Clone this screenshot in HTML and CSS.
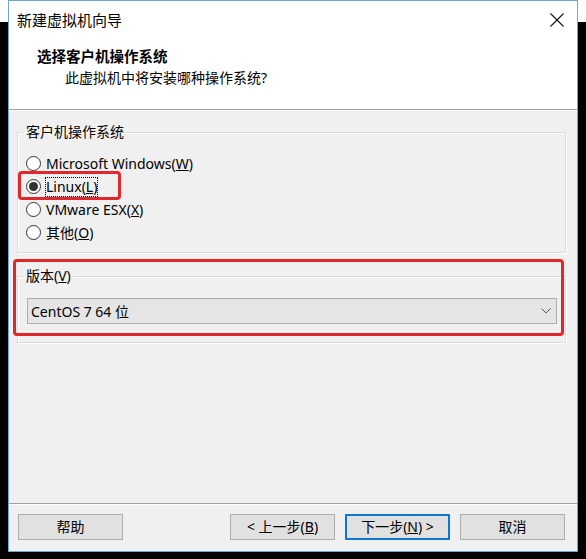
FILE: index.html
```html
<!DOCTYPE html>
<html lang="zh-CN">
<head>
<meta charset="utf-8">
<title>新建虚拟机向导</title>
<link rel="stylesheet" href="styles.css">
</head>
<body>
<div class="window">
  <div class="titlebar">
    <span class="title">新建虚拟机向导</span>
    <svg class="close" width="14" height="14" viewBox="0 0 14 14"><path d="M0.5 0.5 L13.5 13.5 M13.5 0.5 L0.5 13.5" stroke="#111" stroke-width="1.1" fill="none"/></svg>
  </div>
  <div class="header">
    <div class="h-title">选择客户机操作系统</div>
    <div class="h-sub">此虚拟机中将安装哪种操作系统?</div>
  </div>
  <div class="content">
    <fieldset class="group group-os">
      <legend>客户机操作系统</legend>
      <div class="radio-row"><span class="radio"></span><span class="rlabel">Microsoft Windows(<u>W</u>)</span></div>
      <div class="radio-row"><span class="radio checked"></span><span class="rlabel focus">Linux(<u>L</u>)</span></div>
      <div class="radio-row"><span class="radio"></span><span class="rlabel">VMware ESX(<u>X</u>)</span></div>
      <div class="radio-row"><span class="radio"></span><span class="rlabel">其他(<u>O</u>)</span></div>
    </fieldset>
    <fieldset class="group group-ver">
      <legend>版本(<u>V</u>)</legend>
      <div class="combo">
        <span>CentOS 7 64 位</span>
        <svg class="chev" width="10" height="6" viewBox="0 0 10 6"><path d="M0.5 0.5 L5 5 L9.5 0.5" stroke="#555" stroke-width="1" fill="none"/></svg>
      </div>
    </fieldset>
  </div>
  <div class="footer">
    <button class="btn">帮助</button>
    <span class="spacer"></span>
    <button class="btn">&lt; 上一步(<u>B</u>)</button>
    <button class="btn primary">下一步(<u>N</u>) &gt;</button>
    <button class="btn">取消</button>
  </div>
  <div class="mark mark-linux"></div>
  <div class="mark mark-ver"></div>
</div>
</body>
</html>
```
FILE: styles.css
```css
html, body {
  margin: 0;
  padding: 0;
}
body {
  width: 586px;
  height: 559px;
  background: linear-gradient(to bottom, #ffffff 0, #ffffff 22px, #000000 22px, #000000 100%);
  font-family: "Noto Sans", "Noto Sans CJK SC", sans-serif;
  font-size: 14px;
  color: #000;
  overflow: hidden;
}
.window {
  position: relative;
  margin-left: 8px;
  width: 570px;
  height: 552px;
  box-sizing: border-box;
  border: 1px solid #6ea7d6;
  background: #f0f0f0;
  display: flex;
  flex-direction: column;
}
.titlebar {
  height: 37px;
  background: #fff;
  display: flex;
  align-items: center;
  justify-content: space-between;
  padding: 0 13px 0 8px;
  flex: none;
}
.title {
  font-size: 15px;
}
.close {
  display: block;
}
.header {
  height: 72px;
  background: #fff;
  border-bottom: 1px solid #a0a0a0;
  box-sizing: border-box;
  flex: none;
  padding-top: 6px;
}
.h-title {
  font-weight: bold;
  font-size: 14.5px;
  line-height: 24px;
  padding-left: 28px;
}
.h-sub {
  line-height: 20px;
  padding-left: 56px;
  font-size: 14px;
}
.content {
  flex: 1;
  padding: 11px 11px 0 8px;
  display: flex;
  flex-direction: column;
  gap: 13px;
  border-top: 1px solid #fff;
}
.group {
  margin: 0;
  border: 1px solid #dcdcdc;
  box-shadow: inset 1px 1px 0 #fff, 1px 1px 0 #fff;
  padding: 0 6px;
  min-width: 0;
}
.group legend {
  padding: 0 2px;
  line-height: 20px;
  font-size: 14px;
}
.group-os {
  padding-top: 10px;
  padding-bottom: 8px;
}
.radio-row {
  height: 23px;
  display: flex;
  align-items: center;
  gap: 5px;
  padding-left: 2px;
}
.radio {
  width: 15px;
  height: 15px;
  box-sizing: border-box;
  border: 1px solid #333;
  border-radius: 50%;
  background: #fff;
  display: flex;
  align-items: center;
  justify-content: center;
  flex: none;
}
.radio.checked::after {
  content: "";
  width: 9px;
  height: 9px;
  border-radius: 50%;
  background: #333;
}
.rlabel {
  line-height: 20px;
}
.rlabel.focus {
  outline: 1px dotted #000;
  outline-offset: -1px;
  padding: 0 1px;
  margin-left: -1px;
}
.group-ver {
  padding-top: 12px;
  padding-bottom: 18px;
  padding-left: 9px;
  padding-right: 8px;
}
.group-ver legend {
  margin-left: -3px;
}
.combo {
  height: 26px;
  box-sizing: border-box;
  border: 1px solid #adadad;
  background: #e5e5e5;
  display: flex;
  align-items: center;
  justify-content: space-between;
  padding: 0 5px 0 3px;
}
.chev {
  display: block;
}
.footer {
  height: 48px;
  flex: none;
  border-top: 1px solid #a0a0a0;
  box-shadow: inset 0 1px 0 #fff;
  box-sizing: border-box;
  display: flex;
  align-items: flex-start;
  padding: 10px 12px 0 9px;
  gap: 10px;
}
.spacer {
  flex: 1;
}
.btn {
  width: 105px;
  height: 26px;
  box-sizing: border-box;
  border: 1px solid #adadad;
  background: #e1e1e1;
  font-family: inherit;
  font-size: 14px;
  color: #000;
  padding: 0;
  line-height: 22px;
}
.btn.primary {
  border: 2px solid #0a78d4;
}
.mark {
  position: absolute;
  border: 3px solid #e3262b;
  border-radius: 4px;
  box-sizing: border-box;
  pointer-events: none;
}
.mark-linux {
  left: 9px;
  top: 170px;
  width: 103px;
  height: 29px;
}
.mark-ver {
  left: 4px;
  top: 258px;
  width: 551px;
  height: 77px;
}
```
